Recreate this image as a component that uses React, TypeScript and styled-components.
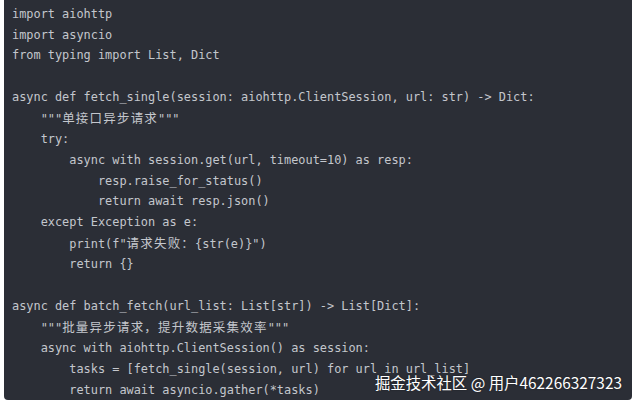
import React from "react";
import styled, { createGlobalStyle } from "styled-components";

const Global = createGlobalStyle`
  html, body { margin: 0; padding: 0; background: #ffffff; }
  body { width: 634px; height: 403px; overflow: hidden; }
`;

const Page = styled.div`
  padding: 0 2px 3px 4px;
`;

const CodeCard = styled.div`
  position: relative;
  width: 628px;
  height: 400px;
  box-sizing: border-box;
  background: #2b2e36;
  border-radius: 0 0 4px 4px;
  padding: 4px 0 0 8px;
  overflow: hidden;
`;

const Code = styled.pre`
  margin: 0;
  font-family: "DejaVu Sans Mono", "Noto Sans CJK SC", monospace;
  font-size: 11.9px;
  line-height: 20.7px;
  color: #c4c7cd;
  white-space: pre;
`;

const Cjk = styled.span`
  font-family: "Noto Sans CJK SC", sans-serif;
  font-size: 12.5px;
  letter-spacing: 1.2px;
`;

const Watermark = styled.div`
  position: absolute;
  right: 10px;
  bottom: 12px;
  font-family: "Noto Sans CJK SC", "Noto Sans", sans-serif;
  font-size: 15.4px;
  line-height: 12px;
  color: #ffffff;
  text-shadow: 0 0 2px rgba(0, 0, 0, 0.35);
  white-space: nowrap;
`;

const lines: React.ReactNode[] = [
  "import aiohttp",
  "import asyncio",
  "from typing import List, Dict",
  "",
  "async def fetch_single(session: aiohttp.ClientSession, url: str) -> Dict:",
  <>{'    """'}<Cjk>单接口异步请求</Cjk>{'"""'}</>,
  "    try:",
  "        async with session.get(url, timeout=10) as resp:",
  "            resp.raise_for_status()",
  "            return await resp.json()",
  "    except Exception as e:",
  <>{'        print(f"'}<Cjk>请求失败：</Cjk>{'{str(e)}")'}</>,
  "        return {}",
  "",
  "async def batch_fetch(url_list: List[str]) -> List[Dict]:",
  <>{'    """'}<Cjk>批量异步请求，提升数据采集效率</Cjk>{'"""'}</>,
  "    async with aiohttp.ClientSession() as session:",
  "        tasks = [fetch_single(session, url) for url in url_list]",
  "        return await asyncio.gather(*tasks)",
];

export default function App() {
  return (
    <Page>
      <Global />
      <CodeCard>
        <Code>
          {lines.map((l, i) => (
            <React.Fragment key={i}>
              {l}
              {"\n"}
            </React.Fragment>
          ))}
        </Code>
        <Watermark>掘金技术社区 @ 用户462266327323</Watermark>
      </CodeCard>
    </Page>
  );
}
